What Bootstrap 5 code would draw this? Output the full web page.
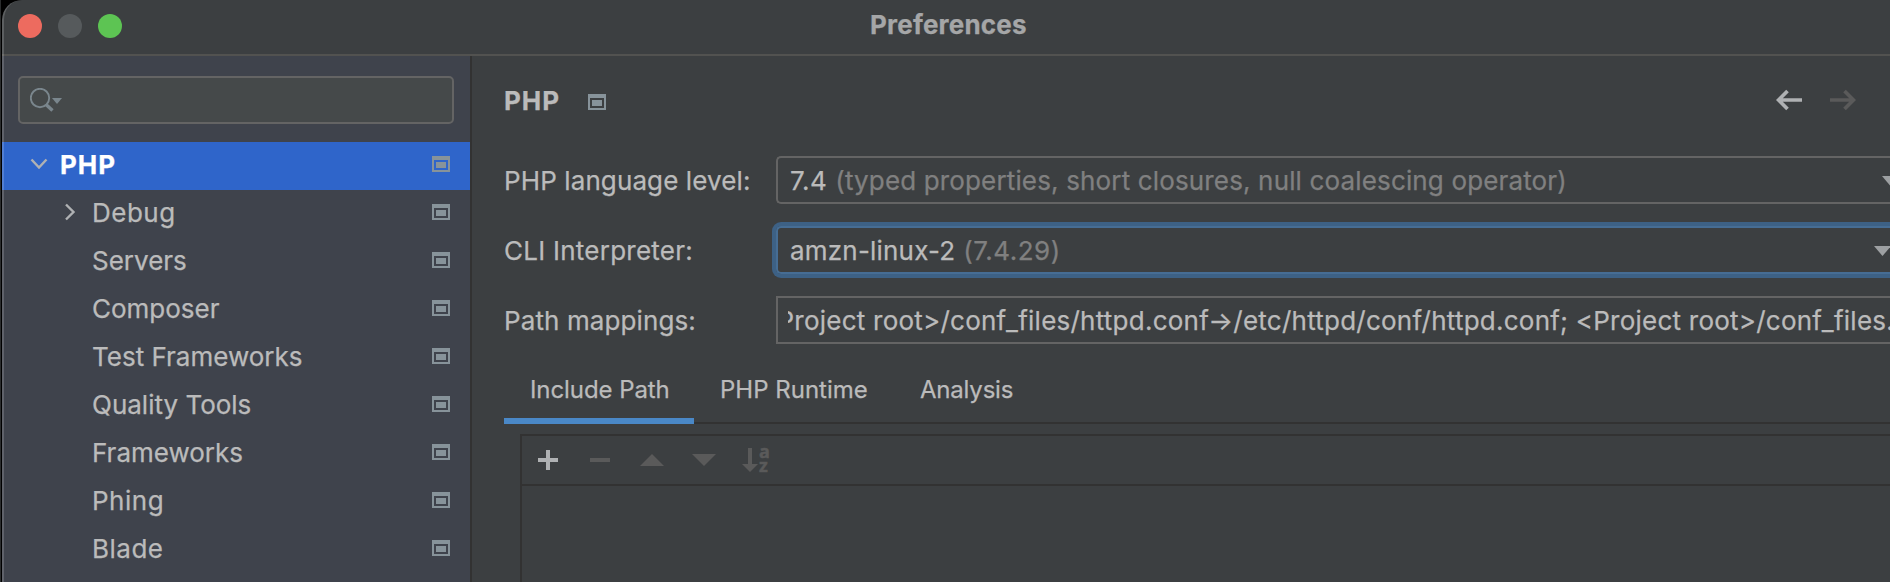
<!DOCTYPE html>
<html lang="en">
<head>
<meta charset="utf-8">
<title>Preferences</title>
<link href="https://cdn.jsdelivr.net/npm/bootstrap@5.3.0/dist/css/bootstrap.min.css" rel="stylesheet">
<style>
body{background:linear-gradient(90deg,#2b2d2e 1px,#000 1px);font-family:Inter,"Liberation Sans",sans-serif;font-size:26px;color:#bbb;line-height:48px;-webkit-text-stroke:.25px currentColor}
svg{display:block;flex:none}
.window{height:582px;margin-left:2px;background:#3c3f41;border-top-left-radius:20px}
.window::after{content:"";position:absolute;inset:0 0 -20px 0;border-left:2px solid rgba(255,255,255,.17);border-top-left-radius:20px;pointer-events:none}
.titlebar{height:56px;border-bottom:2px solid #525250}
.lights{padding:14px 0 0 16px;gap:16px;width:200px}
.light{width:24px;height:24px;border-radius:50%}
.title{padding-left:668px;line-height:49px;font-weight:700;color:#a5a6a7;letter-spacing:.2px}
.sidebar{width:470px;background:#3f434c;border-right:2px solid #323232;padding-top:20px}
.search{height:48px;margin:0 16px 18px 16px;border:2px solid #646464;border-radius:5px;background:#45494a;padding:10px 0 0 10px}
.tree-row{height:48px;line-height:46px;padding:0 20px 4px 90px;color:#bbb}
.tree-row .me-auto{padding-top:2px}
.tree-row.top{background:#2f65ca;color:#fff;font-weight:700;padding-left:28px;letter-spacing:1px}
.arrow{width:30px}
.tree-row.sub{padding-left:62px}
.wide{letter-spacing:.5px}
.main{padding-left:32px}
.heading{height:48px;margin-top:20px;padding-right:34px;font-weight:700;letter-spacing:1px}
.heading span{line-height:48px;padding-top:2px}
.form-line{height:48px;margin-bottom:22px;line-height:50px}
.form-line .name{width:272px;letter-spacing:.11px}
.field{border:2px solid #646464;border-right:0;border-radius:5px 0 0 5px;line-height:46px;padding-left:12px;height:48px}
.field.focused{border-color:#466d94;box-shadow:0 0 0 4px #3d6185}
.field.flat{border-radius:0;padding-left:10px}
.hint{color:#808080;margin-left:8px}
.mapping{margin-left:-28px;letter-spacing:.24px}
.tab-strip{height:58px;border-bottom:2px solid #323232;font-size:24px;line-height:47px;margin-top:22px}
.tab-item{height:58px}
.tab-item.on{border-bottom:6px solid #4a88c7;letter-spacing:-.08px}
.list-panel{margin:10px 0 0 16px;border:2px solid #323232;border-width:2px 0 0 2px}
.tools{height:50px;border-bottom:2px solid #323232;padding-left:12px;gap:20px}
.az{font:700 18px/14px "Open Sans",sans-serif;color:#5a5a5a;-webkit-text-stroke:.5px #5a5a5a;margin-top:-5px}
</style>
</head>
<body class="overflow-hidden">
<svg width="0" height="0" class="position-absolute">
  <symbol id="proj" viewBox="0 0 18 16"><path fill="#87939a" fill-rule="evenodd" d="M0 0h18v16H0zM2 4v10h14V4zM4 6h10v6H4z"/></symbol>
</svg>
<div class="window position-relative overflow-hidden d-flex flex-column">
  <header class="titlebar d-flex flex-shrink-0">
    <div class="lights d-flex flex-shrink-0">
      <span class="light" style="background:#ed6b5f"></span>
      <span class="light" style="background:#565a5c"></span>
      <span class="light" style="background:#5dc453"></span>
    </div>
    <div class="title">Preferences</div>
  </header>
  <div class="d-flex flex-grow-1">
    <aside class="sidebar flex-shrink-0">
      <div class="search">
        <svg width="34" height="26" viewBox="0 0 34 26"><circle cx="10" cy="10" r="9.2" fill="none" stroke="#7a868d" stroke-width="1.9"/><path d="m16 16.500 6.500 6" stroke="#7a868d" stroke-width="3.400"/><path d="M22 10h10l-5 6z" fill="#7a868d"/></svg>
      </div>
      <div class="tree-row top d-flex align-items-center"><span class="arrow"><svg width="18" height="12" viewBox="0 0 18 12"><path d="m1.500 1.500 7.500 8 7.500-8" fill="none" stroke="#afb1b3" stroke-width="2.400"/></svg></span><span class="me-auto">PHP</span><svg width="18" height="16"><use href="#proj"/></svg></div>
      <div class="tree-row sub d-flex align-items-center"><span style="width:28px"><svg width="12" height="18" viewBox="0 0 12 18"><path d="m2 1.500 7.500 7.500-7.500 7.500" fill="none" stroke="#afb1b3" stroke-width="2.400"/></svg></span><span class="me-auto wide">Debug</span><svg width="18" height="16"><use href="#proj"/></svg></div>
      <div class="tree-row d-flex align-items-center"><span class="me-auto">Servers</span><svg width="18" height="16"><use href="#proj"/></svg></div>
      <div class="tree-row d-flex align-items-center"><span class="me-auto">Composer</span><svg width="18" height="16"><use href="#proj"/></svg></div>
      <div class="tree-row d-flex align-items-center"><span class="me-auto">Test Frameworks</span><svg width="18" height="16"><use href="#proj"/></svg></div>
      <div class="tree-row d-flex align-items-center"><span class="me-auto">Quality Tools</span><svg width="18" height="16"><use href="#proj"/></svg></div>
      <div class="tree-row d-flex align-items-center"><span class="me-auto">Frameworks</span><svg width="18" height="16"><use href="#proj"/></svg></div>
      <div class="tree-row d-flex align-items-center"><span class="me-auto wide">Phing</span><svg width="18" height="16"><use href="#proj"/></svg></div>
      <div class="tree-row d-flex align-items-center"><span class="me-auto wide">Blade</span><svg width="18" height="16"><use href="#proj"/></svg></div>
    </aside>
    <main class="main flex-grow-1 overflow-hidden">
      <div class="heading d-flex align-items-center">
        <span style="width:84px">PHP</span>
        <svg width="18" height="16" class="mt-2 mb-1"><use href="#proj"/></svg>
        <svg class="ms-auto" width="80" height="22" viewBox="0 0 80 22" fill="none" stroke-width="3.700"><path d="M26 11H3M11.500 2 2.500 11l9 9" stroke="#afb1b3"/><path d="M54 11h23M68.500 2l9 9-9 9" stroke="#5a5a5a"/></svg>
      </div>
      <div class="form-line d-flex" style="margin-top:32px">
        <span class="name flex-shrink-0">PHP language level:</span>
        <div class="field flex-grow-1 d-flex"><span class="wide">7.4</span><span class="hint" style="letter-spacing:.15px">(typed properties, short closures, null coalescing operator)</span><svg class="ms-auto mt-3" width="8" height="16" viewBox="0 0 8 16"><path d="M0 2h17L8.500 12z" fill="#9da0a2"/></svg></div>
      </div>
      <div class="form-line d-flex">
        <span class="name flex-shrink-0" style="letter-spacing:.25px">CLI Interpreter:</span>
        <div class="field focused flex-grow-1 d-flex"><span style="letter-spacing:.2px">amzn-linux-2</span><span class="hint wide">(7.4.29)</span><svg class="ms-auto mt-3" width="16" height="16" viewBox="0 0 16 16"><path d="M0 2h17L8.500 12z" fill="#9da0a2"/></svg></div>
      </div>
      <div class="form-line d-flex">
        <span class="name flex-shrink-0">Path mappings:</span>
        <div class="field flat flex-grow-1" style="min-width:0"><div class="overflow-hidden text-nowrap"><span class="mapping">&lt;Project root&gt;/conf_files/httpd.conf→/etc/httpd/conf/httpd.conf; &lt;Project root&gt;/conf_files...</span></div></div>
      </div>
      <nav class="tab-strip d-flex">
        <span class="tab-item on" style="width:190px;padding-left:26px">Include Path</span>
        <span class="tab-item" style="width:200px;padding-left:26px">PHP Runtime</span>
        <span class="tab-item" style="padding-left:26px;letter-spacing:-.2px">Analysis</span>
      </nav>
      <div class="list-panel h-100">
        <div class="tools d-flex align-items-center">
          <svg width="32" height="32"><path d="M4 16h20M14 6v20" stroke="#afb1b3" stroke-width="4"/></svg>
          <svg width="32" height="32"><path d="M4 16h20" stroke="#5a5a5a" stroke-width="4"/></svg>
          <svg width="32" height="32"><path d="M2 22h24L14 10z" fill="#5a5a5a"/></svg>
          <svg width="32" height="32"><path d="M2 10h24L14 22z" fill="#5a5a5a"/></svg>
          <div class="d-flex align-items-center"><svg width="17" height="32" fill="#5a5a5a"><path d="M6 4h4v16h6l-8 8-8-8h6z"/></svg><div class="az"><div>a</div><div>z</div></div></div>
        </div>
      </div>
    </main>
  </div>
</div>
<script src="https://cdn.jsdelivr.net/npm/bootstrap@5.3.0/dist/js/bootstrap.bundle.min.js"></script>
</body>
</html>
